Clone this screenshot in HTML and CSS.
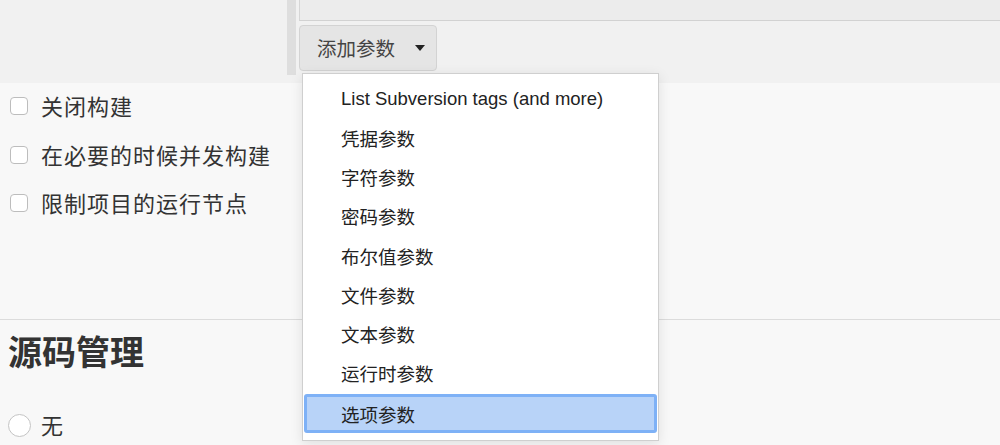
FILE: index.html
```html
<!DOCTYPE html>
<html lang="zh-CN">
<head>
<meta charset="utf-8">
<title>配置</title>
<link rel="stylesheet" href="styles.css">
</head>
<body>
<div class="page">
  <div class="top">
    <div class="top-left"></div>
    <div class="top-bar"></div>
    <div class="params">
      <div class="param-box"></div>
      <button class="add-btn">添加参数 <span class="caret"></span></button>
    </div>
  </div>
  <div class="options">
    <label class="opt"><span class="cb"></span>关闭构建</label>
    <label class="opt"><span class="cb"></span>在必要的时候并发构建</label>
    <label class="opt"><span class="cb"></span>限制项目的运行节点</label>
  </div>
  <div class="section">
    <h2 class="section-title">源码管理</h2>
    <label class="opt radio-opt"><span class="rb"></span>无</label>
  </div>
  <ul class="menu">
    <li class="item">List Subversion tags (and more)</li>
    <li class="item">凭据参数</li>
    <li class="item">字符参数</li>
    <li class="item">密码参数</li>
    <li class="item">布尔值参数</li>
    <li class="item">文件参数</li>
    <li class="item">文本参数</li>
    <li class="item">运行时参数</li>
    <li class="item active">选项参数</li>
  </ul>
</div>
</body>
</html>
```
FILE: styles.css
```css
* { box-sizing: border-box; }
html, body {
  margin: 0;
  padding: 0;
  width: 1000px;
  height: 445px;
  overflow: hidden;
  background: #f8f8f8;
  font-family: "Liberation Sans", "Noto Sans CJK SC", sans-serif;
  color: #333;
}
.page {
  position: relative;
  width: 1000px;
  height: 445px;
}
.top {
  display: flex;
  height: 83px;
  background: #f1f1f1;
}
.top-left { width: 287px; }
.top-bar {
  width: 9px;
  height: 75px;
  background: #dedede;
}
.params {
  flex: 1;
  margin-left: 3px;
  display: flex;
  flex-direction: column;
  align-items: flex-start;
}
.param-box {
  width: 100%;
  height: 21px;
  background: #ececec;
  border-left: 1px solid #d6d6d6;
  border-bottom: 1px solid #d2d2d2;
}
.add-btn {
  margin-top: 4px;
  width: 138px;
  height: 46px;
  padding: 0 0 2px 17px;
  background: #e5e5e5;
  border: 1px solid #d3d3d3;
  border-radius: 4px;
  font-family: "Noto Sans CJK SC", sans-serif;
  font-size: 19.5px;
  color: #444;
  text-align: left;
  display: flex;
  align-items: center;
}
.caret {
  display: inline-block;
  margin-left: 20px;
  margin-top: 2px;
  width: 0;
  height: 0;
  border-left: 5px solid transparent;
  border-right: 5px solid transparent;
  border-top: 6px solid #222;
}
.options {
  display: flex;
  flex-direction: column;
  padding: 0 0 0 10px;
  height: 237px;
  border-bottom: 1px solid #dcdcdc;
}
.opt {
  display: flex;
  align-items: center;
  height: 48.5px;
  font-family: "Noto Sans CJK SC", sans-serif;
  font-size: 22px;
  color: #333;
  letter-spacing: 1px;
}
.options .opt { padding-bottom: 4px; }
.cb {
  width: 18px;
  height: 18px;
  border: 1px solid #bdbdbd;
  border-radius: 4px;
  background: #fff;
  margin-right: 13px;
  margin-top: 2px;
}
.section {
  padding: 0 0 0 8px;
}
.section-title {
  margin: 0;
  padding-top: 11px;
  height: 86px;
  font-family: "Noto Sans CJK SC", sans-serif;
  font-size: 34px;
  font-weight: 700;
  color: #333;
  line-height: 40px;
}
.radio-opt { height: 36px; }
.rb {
  width: 23px;
  height: 23px;
  border: 1px solid #c4c4c4;
  border-radius: 50%;
  background: #fff;
  margin-right: 10px;
  margin-top: 2px;
}
.menu {
  position: absolute;
  left: 302px;
  top: 73px;
  width: 357px;
  height: 368px;
  margin: 0;
  padding: 5px 1px 0 1px;
  list-style: none;
  background: #fff;
  border: 1px solid #cfcfcf;
  box-shadow: 0 3px 12px rgba(0,0,0,0.10);
}
.item {
  height: 39.25px;
  display: flex;
  align-items: center;
  padding-left: 37px;
  font-size: 18.5px;
  color: #222;
  font-family: "Liberation Sans", "Noto Sans CJK SC", sans-serif;
}
.item.active {
  background: #b8d3f8;
  border: 3px solid #7eb1f6;
  border-radius: 3px;
  padding-left: 34px;
  margin-top: 1px;
}
```
